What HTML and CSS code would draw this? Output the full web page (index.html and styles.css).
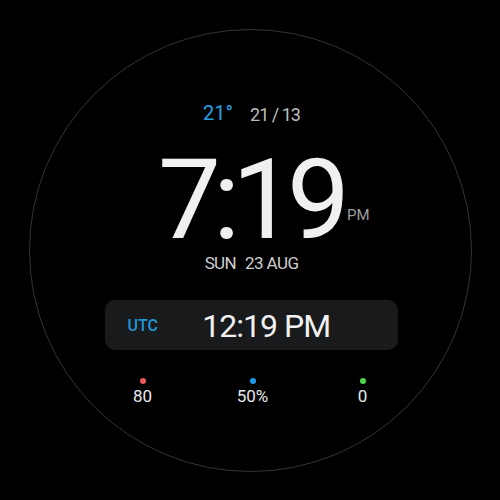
FILE: index.html
```html
<!DOCTYPE html>
<html>
<head>
<meta charset="utf-8">
<link rel="stylesheet" href="styles.css">
</head>
<body>
<div class="face">
  <div class="ring">
    <div class="top">
      <span class="temp">21°</span>
      <span class="range">21 / 13</span>
    </div>
    <div class="time">
      <span class="hm">7:19<span class="ampm">PM</span></span>
    </div>
    <div class="date"><span>SUN</span><span>23 AUG</span></div>
    <div class="utc">
      <span class="label">UTC</span>
      <span class="utime">12:19 PM</span>
    </div>
    <div class="stats">
      <div class="stat"><span class="dot red"></span><span class="val">80</span></div>
      <div class="stat"><span class="dot blue"></span><span class="val">50%</span></div>
      <div class="stat"><span class="dot green"></span><span class="val">0</span></div>
    </div>
  </div>
</div>
</body>
</html>
```

FILE: styles.css
```css
html, body {
  margin: 0;
  padding: 0;
  background: #000;
}
body {
  font-family: Roboto, "Liberation Sans", sans-serif;
}
.face {
  width: 500px;
  height: 500px;
  display: flex;
  align-items: center;
  justify-content: center;
}
.ring {
  box-sizing: border-box;
  width: 443px;
  height: 443px;
  border: 1.5px solid #343434;
  border-radius: 50%;
  display: flex;
  flex-direction: column;
  align-items: center;
  padding-top: 73px;
}
.top {
  display: flex;
  align-items: flex-start;
  gap: 17px;
  padding-left: 3px;
}
.temp {
  color: #2aa0e4;
  font-size: 20px;
  line-height: 20px;
}
.range {
  color: #bdbdbd;
  font-size: 18px;
  line-height: 18px;
  margin-top: 3.5px;
  letter-spacing: -1px;
}
.time {
  margin-top: 25.6px;
  color: #f0f0f0;
  font-size: 112px;
  line-height: 100px;
  height: 100px;
}
.hm {
  display: inline-block;
  position: relative;
  letter-spacing: -8px;
  line-height: 100px;
}
.ampm {
  position: absolute;
  left: 100%;
  bottom: 27px;
  margin-left: 5px;
  font-size: 15px;
  line-height: 15px;
  letter-spacing: 0;
  color: #9e9e9e;
}
.date {
  margin-top: 4px;
  display: flex;
  gap: 9px;
  color: #cfcfcf;
  font-size: 17px;
  line-height: 18px;
  letter-spacing: -0.6px;
  padding-left: 3px;
}
.utc {
  margin-top: 28px;
  box-sizing: border-box;
  width: 293px;
  height: 50px;
  background: #181a1c;
  border-radius: 10px;
  display: flex;
  align-items: center;
  padding: 3px 23px 0 23px;
  margin-left: 2px;
}
.label {
  color: #1f97d8;
  font-size: 16px;
  line-height: 16px;
  font-weight: 500;
}
.utime {
  flex: 1;
  text-align: center;
  color: #f0f0f0;
  font-size: 32px;
  line-height: 34px;
  letter-spacing: -1px;
}
.stats {
  margin-top: 28px;
  display: grid;
  grid-template-columns: repeat(3, 110px);
  padding-left: 5px;
}
.stat {
  display: flex;
  flex-direction: column;
  align-items: center;
}
.dot {
  width: 6px;
  height: 6px;
  border-radius: 50%;
}
.red { background: #e85a5a; }
.blue { background: #1e9be8; }
.green { background: #4cd64c; }
.val {
  margin-top: 4.7px;
  color: #e8e8e8;
  font-size: 17px;
  line-height: 17px;
}
```
